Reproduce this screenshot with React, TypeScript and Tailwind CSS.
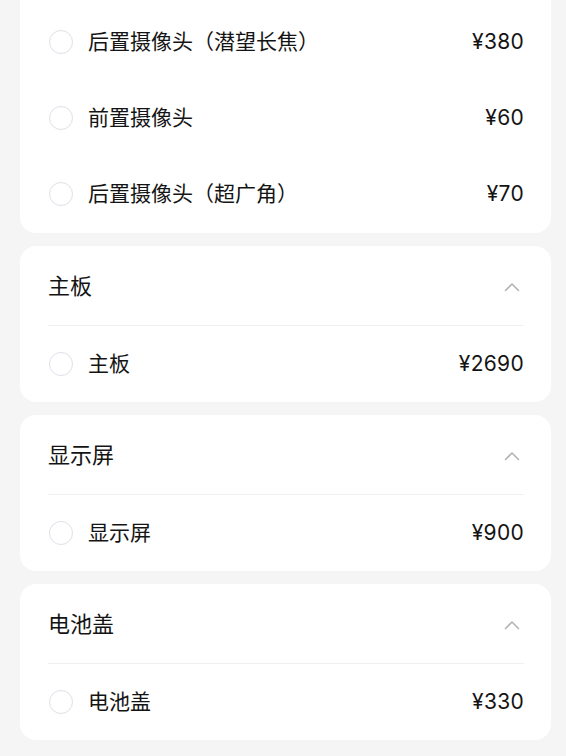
const FONT = { fontFamily: '"Inter", "Noto Sans CJK SC", sans-serif' }

type Part = { name: string; price: number }

const TOP_PARTS: Part[] = [
  { name: '后置摄像头（潜望长焦）', price: 380 },
  { name: '前置摄像头', price: 60 },
  { name: '后置摄像头（超广角）', price: 70 },
]

const GROUPS: { title: string; parts: Part[] }[] = [
  { title: '主板', parts: [{ name: '主板', price: 2690 }] },
  { title: '显示屏', parts: [{ name: '显示屏', price: 900 }] },
  { title: '电池盖', parts: [{ name: '电池盖', price: 330 }] },
]

const Chevron = () => (
  <svg width="16" height="10" viewBox="0 0 16 10" fill="none">
    <polyline points="1.5,8.5 8,2 14.5,8.5" stroke="#b3b3b3" strokeWidth="1.6" strokeLinecap="round" strokeLinejoin="round" />
  </svg>
)

const PartRow = ({ part }: { part: Part }) => (
  <div className="flex items-center h-[76px]">
    <span className="w-[24px] h-[24px] rounded-full border-[1.5px] border-[#dfdfe8] shrink-0 ml-[1px]" />
    <span className="ml-[15px] text-[21px] text-[#141414]">{part.name}</span>
    <span className="ml-auto text-[21px] text-[#141414] tracking-[0.3px]">¥{part.price}</span>
  </div>
)

export default function App() {
  return (
    <div className="min-h-[756px] bg-[#f5f5f5] pl-[20px] pr-[15px] pb-[16px]" style={FONT}>
      <div className="bg-white rounded-b-[16px] pl-[28px] pr-[27px] pt-[4px] pb-[1px]">
        {TOP_PARTS.map((p) => (
          <PartRow key={p.name} part={p} />
        ))}
      </div>
      {GROUPS.map((g) => (
        <div key={g.title} className="bg-white rounded-[16px] pl-[28px] pr-[27px] mt-[13px]">
          <div className="flex items-center justify-between h-[79px] pt-[2px]">
            <span className="text-[22px] text-[#141414]">{g.title}</span>
            <span className="mr-[4px]"><Chevron /></span>
          </div>
          <div className="h-[1px] bg-[#f0f0f0]" />
          {g.parts.map((p) => (
            <PartRow key={p.name} part={p} />
          ))}
        </div>
      ))}
    </div>
  )
}
